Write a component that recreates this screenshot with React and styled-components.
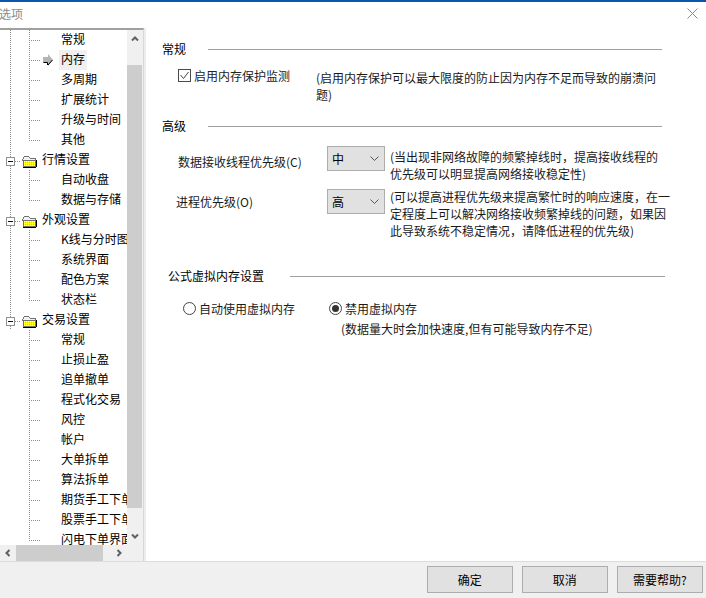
import styled, { createGlobalStyle } from "styled-components";

const GlobalStyle = createGlobalStyle`
html, body {
    margin: 0;
    padding: 0;
    background: #fff;
}
body {
    font-family: "Noto Sans CJK SC", "Liberation Sans", sans-serif;
    font-size: 12px;
    color: #000;
}
`

const Window = styled.div`
width: 706px;
height: 598px;
display: flex;
flex-direction: column;
overflow: hidden;
`

const TitleBar = styled.div`
height: 28px;
flex: none;
box-sizing: border-box;
border-top: 2px solid #0a56ad;
padding: 0 8px 3px 0;
display: flex;
align-items: center;
justify-content: space-between;
font-size: 12px;
color: #8a8a8a;
`

const TitleText = styled.span`
margin-left: -1px;
`

const Main = styled.div`
flex: 1;
display: flex;
min-height: 0;
`

const Sidebar = styled.div`
width: 143px;
flex: none;
display: flex;
flex-direction: column;
border-top: 2px solid #a0a0a0;
border-right: 1px solid #d8d8d8;
`

const TreeArea = styled.div`
flex: 1;
display: flex;
min-height: 0;
`

const Tree = styled.div`
width: 127px;
flex: none;
overflow: hidden;
background-color: #fff;
`

const dots = "linear-gradient(#8c8c8c 50%, transparent 50%)";
const dotsX = "linear-gradient(to right, #8c8c8c 50%, transparent 50%)";

const Row = styled.div`
height: 20px;
display: flex;
align-items: flex-start;
white-space: nowrap;
overflow: hidden;
background-image: ${p => (p.$trunk ? dots : "none")};
background-size: 1px 2px;
background-position: 10px 0;
background-repeat: repeat-y;
`

const Elbow = styled.div`
width: 11px;
height: ${p => (p.$last ? "11px" : "20px")};
flex: none;
margin-left: 29px;
background-image: ${dots}, ${dotsX};
background-size: 1px 2px, 2px 1px;
background-position: 0 0, 0 10px;
background-repeat: repeat-y, repeat-x;
`

const ChildIcon = styled.div`
width: 19px;
height: 20px;
flex: none;
display: flex;
align-items: center;
padding-left: 3px;
box-sizing: border-box;
`

const ChildLabel = styled.span`
height: 20px;
line-height: 18px;
padding: 0 2px;
background-color: ${p => (p.$selected ? "#f0f0f0" : "transparent")};
`

const RootStem = styled.div`
width: 6px;
height: 12px;
flex: none;
background-image: ${dotsX};
background-size: 2px 1px;
background-position: 0 11px;
background-repeat: repeat-x;
`

const Toggle = styled.div`
width: 9px;
height: 9px;
flex: none;
margin: 7px 0 0 6px;
box-sizing: border-box;
border: 1px solid #909090;
background-color: #fff;
display: flex;
align-items: center;
justify-content: center;

&::before {
    content: "";
    width: 5px;
    height: 1px;
    background-color: #000080;
}
`

const FolderBox = styled.div`
width: 21px;
height: 20px;
flex: none;
box-sizing: border-box;
padding: 5px 0 0 1px;
display: flex;
align-items: flex-start;
`

const RootLabel = styled.span`
line-height: 18px;
`

const VScroll = styled.div`
width: 16px;
flex: none;
display: flex;
flex-direction: column;
background-color: #f0f0f0;
`

const ScrollButton = styled.div`
flex: none;
display: flex;
align-items: center;
justify-content: center;
width: ${p => p.$w}px;
height: ${p => p.$h}px;
`

const VThumb = styled.div`
width: 15px;
height: 443px;
flex: none;
margin-top: 17px;
background-color: #cdcdcd;
`

const ScrollFill = styled.div`
flex: 1;
`

const HScroll = styled.div`
height: 16px;
flex: none;
display: flex;
background-color: #f0f0f0;
`

const HThumb = styled.div`
width: 87px;
flex: none;
background-color: #cdcdcd;
`

const Content = styled.div`
flex: 1;
min-width: 0;
padding: 14px 0 0 16px;
border-left: 2px solid #ededed;
`

const SectionHead = styled.div`
display: flex;
align-items: center;
height: 14px;
line-height: 14px;
margin-left: ${p => p.$indent || 0}px;
margin-top: ${p => p.$top || 0}px;
`

const HeadTitle = styled.span`
width: ${p => p.$w}px;
flex: none;
`

const HeadLine = styled.div`
width: ${p => p.$w}px;
height: 1px;
background-color: #a0a0a0;
`

const CheckRow = styled.div`
display: flex;
margin: 13px 0 0 16px;
`

const CheckLabel = styled.label`
width: 138px;
flex: none;
display: flex;
align-items: center;
gap: 3px;
height: 17px;
margin-top: -2px;
color: #222;
`

const CheckBox = styled.span`
width: 13px;
height: 13px;
flex: none;
box-sizing: border-box;
border: 1px solid #4a4a4a;
display: flex;
align-items: center;
justify-content: center;
`

const Note = styled.p`
margin: ${p => p.$top || 0}px 0 0;
width: ${p => p.$w}px;
line-height: 17px;
color: #1a1a1a;
`

const PriorityGrid = styled.div`
display: grid;
grid-template-columns: 165px 63px 1fr;
row-gap: 7px;
margin: 13px 0 0 0;
`

const FieldLabel = styled.div`
height: 25px;
line-height: ${p => p.$lh}px;
padding-left: ${p => p.$left}px;
color: #1a1a1a;
`

const Select = styled.div`
width: 58px;
height: 25px;
box-sizing: border-box;
border: 1px solid #adadad;
background-color: #e1e1e1;
display: flex;
align-items: center;
justify-content: space-between;
padding: 0 5px 0 4px;
`

const RadioRow = styled.div`
display: flex;
margin: 17px 0 0 21px;
`

const RadioItem = styled.label`
width: ${p => p.$w}px;
flex: none;
display: flex;
align-items: center;
gap: 3px;
height: 17px;
color: #1a1a1a;
`

const Radio = styled.span`
width: 13px;
height: 13px;
flex: none;
box-sizing: border-box;
border: 1px solid #444;
border-radius: 50%;
display: flex;
align-items: center;
justify-content: center;

&::before {
    content: "";
    width: 7px;
    height: 7px;
    border-radius: 50%;
    background-color: ${p => (p.$on ? "#333" : "transparent")};
}
`

const RadioNote = styled.div`
margin: 3px 0 0 179px;
line-height: 17px;
color: #1a1a1a;
`

const Footer = styled.div`
height: 37px;
flex: none;
border-top: 1px solid #dcdcdc;
background-color: #f0f0f0;
display: flex;
gap: 9.5px;
padding: 4px 0 0 427px;
box-sizing: border-box;
`

const Button = styled.button`
width: 85.5px;
height: 27px;
box-sizing: border-box;
border: 1px solid #adadad;
background-color: #e1e1e1;
font-family: inherit;
font-size: 12px;
color: #000;
padding: 0;
`

const Chevron = ({ dir }) => {
    const paths = {
        up: "M1 5.5 L4 2.5 L7 5.5",
        down: "M1 2.5 L4 5.5 L7 2.5",
        left: "M5.5 1 L2.5 4 L5.5 7",
        right: "M2.5 1 L5.5 4 L2.5 7",
    };
    return (
        <svg width="8" height="8" fill="none" stroke="#606060" strokeWidth="2">
            <path d={paths[dir]} />
        </svg>
    );
};

const SelectArrow = () => (
    <svg width="9" height="5" fill="none" stroke="#555" strokeWidth="1">
        <path d="M0.5 0.5 L4.5 4.5 L8.5 0.5" />
    </svg>
);

const Folder = () => (
    <svg width="15" height="13" shapeRendering="crispEdges">
        <defs>
            <pattern id="hatch" width="2" height="2" patternUnits="userSpaceOnUse">
                <rect width="2" height="2" fill="#ffff00" />
                <rect width="1" height="1" fill="#ffffff" />
                <rect x="1" y="1" width="1" height="1" fill="#c8c8a0" />
            </pattern>
        </defs>
        <path d="M0.5 4.5 L2.5 1.5 L6.5 1.5 L8.5 3.5 L13.5 3.5 L13.5 5.5 L0.5 5.5 Z" fill="#f2f2f2" stroke="#707070" />
        <path d="M1.5 5.5 L1.5 11.5 L13.5 11.5 L13.5 5.5 Z" fill="url(#hatch)" stroke="#707070" />
        <path d="M1 12.5 L14 12.5 M14.5 5 L14.5 12" stroke="#000" />
    </svg>
);

const PointerArrow = () => (
    <svg width="10" height="12" fill="none">
        <path d="M0 3 L5 3 L5 0 L10 6 L5 12 L5 9 L0 9 Z" fill="#b4b4b4" />
        <path d="M0.5 8.5 L4.5 8.5 L4.5 11 M5 11 L9.5 6" stroke="#000" />
    </svg>
);

const CheckMark = () => (
    <svg width="11" height="11" fill="none" stroke="#444" strokeWidth="1">
        <path d="M1.5 5 L4.5 8.5 L9.5 2" />
    </svg>
);

const CloseIcon = () => (
    <svg width="11" height="11" stroke="#8a8a8a" strokeWidth="1">
        <path d="M0.5 0.5 L10.5 10.5 M10.5 0.5 L0.5 10.5" />
    </svg>
);

const treeRows = [
    { label: "常规", trunk: true },
    { label: "内存", trunk: true, selected: true },
    { label: "多周期", trunk: true },
    { label: "扩展统计", trunk: true },
    { label: "升级与时间", trunk: true },
    { label: "其他", trunk: true, last: true },
    { label: "行情设置", root: true, trunk: true },
    { label: "自动收盘", trunk: true },
    { label: "数据与存储", trunk: true, last: true },
    { label: "外观设置", root: true, trunk: true },
    { label: "K线与分时图", trunk: true },
    { label: "系统界面", trunk: true },
    { label: "配色方案", trunk: true },
    { label: "状态栏", trunk: true, last: true },
    { label: "交易设置", root: true },
    { label: "常规" },
    { label: "止损止盈" },
    { label: "追单撤单" },
    { label: "程式化交易" },
    { label: "风控" },
    { label: "帐户" },
    { label: "大单拆单" },
    { label: "算法拆单" },
    { label: "期货手工下单" },
    { label: "股票手工下单" },
    { label: "闪电下单界面", last: true },
];

const TreeRow = ({ row }) => {
    if (row.root) {
        return (
            <Row $trunk>
                <Toggle />
                <RootStem />
                <FolderBox><Folder /></FolderBox>
                <RootLabel>{row.label}</RootLabel>
            </Row>
        );
    }
    return (
        <Row $trunk={row.trunk}>
            <Elbow $last={row.last} />
            <ChildIcon>{row.selected && <PointerArrow />}</ChildIcon>
            <ChildLabel $selected={row.selected}>{row.label}</ChildLabel>
        </Row>
    );
};

const App = () => {
    return (
        <Window>
            <GlobalStyle />
            <TitleBar>
                <TitleText>选项</TitleText>
                <CloseIcon />
            </TitleBar>
            <Main>
                <Sidebar>
                    <TreeArea>
                        <Tree>
                            {treeRows.map((row, i) => <TreeRow key={i} row={row} />)}
                        </Tree>
                        <VScroll>
                            <ScrollButton $w={15} $h={18}><Chevron dir="up" /></ScrollButton>
                            <VThumb />
                            <ScrollFill />
                            <ScrollButton $w={15} $h={18}><Chevron dir="down" /></ScrollButton>
                        </VScroll>
                    </TreeArea>
                    <HScroll>
                        <ScrollButton $w={16} $h={16}><Chevron dir="left" /></ScrollButton>
                        <HThumb />
                        <ScrollFill />
                        <ScrollButton $w={16} $h={16}><Chevron dir="right" /></ScrollButton>
                        <ScrollButton $w={16} $h={16} />
                    </HScroll>
                </Sidebar>
                <Content>
                    <SectionHead>
                        <HeadTitle $w={46}>常规</HeadTitle>
                        <HeadLine $w={454} />
                    </SectionHead>
                    <CheckRow>
                        <CheckLabel>
                            <CheckBox><CheckMark /></CheckBox>
                            启用内存保护监测
                        </CheckLabel>
                        <Note $w={352}>(启用内存保护可以最大限度的防止因为内存不足而导致的崩溃问题)</Note>
                    </CheckRow>
                    <SectionHead $top={16}>
                        <HeadTitle $w={46}>高级</HeadTitle>
                        <HeadLine $w={454} />
                    </SectionHead>
                    <PriorityGrid>
                        <FieldLabel $lh={31} $left={16}>数据接收线程优先级(C)</FieldLabel>
                        <Select>中<SelectArrow /></Select>
                        <Note $w={275} $top={2}>(当出现非网络故障的频繁掉线时，提高接收线程的优先级可以明显提高网络接收稳定性)</Note>
                        <FieldLabel $lh={25} $left={14}>进程优先级(O)</FieldLabel>
                        <Select>高<SelectArrow /></Select>
                        <Note $w={285} $top={-1}>(可以提高进程优先级来提高繁忙时的响应速度，在一定程度上可以解决网络接收频繁掉线的问题，如果因此导致系统不稳定情况，请降低进程的优先级)</Note>
                    </PriorityGrid>
                    <SectionHead $indent={6} $top={30}>
                        <HeadTitle $w={122}>公式虚拟内存设置</HeadTitle>
                        <HeadLine $w={375} />
                    </SectionHead>
                    <RadioRow>
                        <RadioItem $w={146}><Radio />自动使用虚拟内存</RadioItem>
                        <RadioItem $w={110}><Radio $on />禁用虚拟内存</RadioItem>
                    </RadioRow>
                    <RadioNote>(数据量大时会加快速度,但有可能导致内存不足)</RadioNote>
                </Content>
            </Main>
            <Footer>
                <Button>确定</Button>
                <Button>取消</Button>
                <Button>需要帮助?</Button>
            </Footer>
        </Window>
    );
};

export default App;
